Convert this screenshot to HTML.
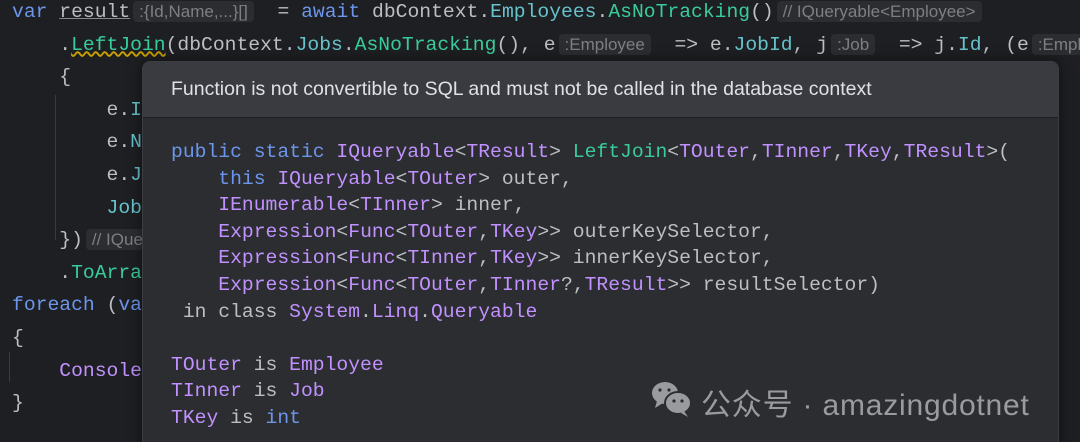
<!DOCTYPE html><html><head><style>
html,body{margin:0;width:1080px;height:442px;overflow:hidden}
body{background:#1e1f22;position:relative;font-family:"Liberation Mono",monospace;color:#bcbec4}
.code{position:absolute;left:12px;top:-4px;font-size:19.7px;line-height:32.6px;white-space:pre}
.k{color:#6c95eb}.m{color:#39cc9b}.p{color:#66c3cc}.t{color:#c191ff}
.h{font-family:"Liberation Sans",sans-serif;font-size:17px;color:#7d7f84;background:#2b2d30;border-radius:4px;padding:1px 6px;margin-left:3px}
.pop{position:absolute;left:142px;top:61px;width:915px;height:400px;background:#2b2d30;border:1px solid #3c3e43;border-radius:8px;overflow:hidden;box-shadow:0 0 14px rgba(0,0,0,.5)}
.hd{height:55px;background:#393b40;border-bottom:1px solid #1e1f22;font-family:"Liberation Sans",sans-serif;font-size:19.5px;color:#dfe1e5;line-height:54px;padding-left:28px}
.sig{position:absolute;left:28px;top:77px;font-size:19.7px;line-height:26.6px;white-space:pre;color:#bcbec4}
.wm{position:absolute;left:701px;top:380px;font-family:"Liberation Sans","Noto Sans CJK SC",sans-serif;font-size:30px;letter-spacing:0.8px;color:#9a9b9e}
.gl{position:absolute;width:1px;background:#3a3b3f}
</style></head><body>
<div class="gl" style="left:55px;top:95px;height:145px"></div>
<div class="gl" style="left:9px;top:352px;height:30px"></div>
<div class="code"><span class="k">var</span> <span style="text-decoration:underline;text-decoration-color:#888">result</span><span class="h">:{Id,Name,...}[]</span>  = <span class="k">await</span> dbContext.<span class="p">Employees</span>.<span class="m">AsNoTracking</span>()<span class="h">// IQueryable&lt;Employee&gt;</span>
    .<span class="m" style="text-decoration:underline wavy #c9a000">LeftJoin</span>(dbContext.<span class="p">Jobs</span>.<span class="m">AsNoTracking</span>(), e<span class="h">:Employee</span>  =&gt; e.<span class="p">JobId</span>, j<span class="h">:Job</span>  =&gt; j.<span class="p">Id</span>, (e<span class="h">:Employee</span>
    {
        e.<span class="p">I</span>
        e.<span class="p">N</span>
        e.<span class="p">J</span>
        <span class="p">Job</span>
    })<span class="h">// IQue</span>
    .<span class="m">ToArra</span>
<span class="k">foreach</span> (<span class="k">va</span>
{
    <span class="t">Console</span>
}</div>
<div class="pop"><div class="hd">Function is not convertible to SQL and must not be called in the database context</div>
<div class="sig"><span class="k">public static</span> <span class="t">IQueryable</span>&lt;<span class="t">TResult</span>&gt; <span class="m">LeftJoin</span>&lt;<span class="t">TOuter</span>,<span class="t">TInner</span>,<span class="t">TKey</span>,<span class="t">TResult</span>&gt;(
    <span class="k">this</span> <span class="t">IQueryable</span>&lt;<span class="t">TOuter</span>&gt; outer,
    <span class="t">IEnumerable</span>&lt;<span class="t">TInner</span>&gt; inner,
    <span class="t">Expression</span>&lt;<span class="t">Func</span>&lt;<span class="t">TOuter</span>,<span class="t">TKey</span>&gt;&gt; outerKeySelector,
    <span class="t">Expression</span>&lt;<span class="t">Func</span>&lt;<span class="t">TInner</span>,<span class="t">TKey</span>&gt;&gt; innerKeySelector,
    <span class="t">Expression</span>&lt;<span class="t">Func</span>&lt;<span class="t">TOuter</span>,<span class="t">TInner</span>?,<span class="t">TResult</span>&gt;&gt; resultSelector)
 in class <span class="t">System</span>.<span class="t">Linq</span>.<span class="t">Queryable</span>

<span class="t">TOuter</span> is <span class="t">Employee</span>
<span class="t">TInner</span> is <span class="t">Job</span>
<span class="t">TKey</span> is <span class="k">int</span></div></div>
<svg style="position:absolute;left:651px;top:381px" width="42" height="36" viewBox="0 0 42 36"><ellipse cx="14" cy="12" rx="13" ry="11" fill="#9a9b9e"/><path d="M6 20 L4 27 L12 22Z" fill="#9a9b9e"/><ellipse cx="27" cy="22" rx="13" ry="11" fill="#9a9b9e" stroke="#2b2d30" stroke-width="2"/><path d="M33 30 L37 36 L30 32Z" fill="#9a9b9e"/><circle cx="9" cy="9" r="1.6" fill="#2b2d30"/><circle cx="18" cy="9" r="1.6" fill="#2b2d30"/><circle cx="23" cy="20" r="1.6" fill="#2b2d30"/><circle cx="31" cy="20" r="1.6" fill="#2b2d30"/></svg>
<div class="wm">公众号 · amazingdotnet</div>
</body></html>
